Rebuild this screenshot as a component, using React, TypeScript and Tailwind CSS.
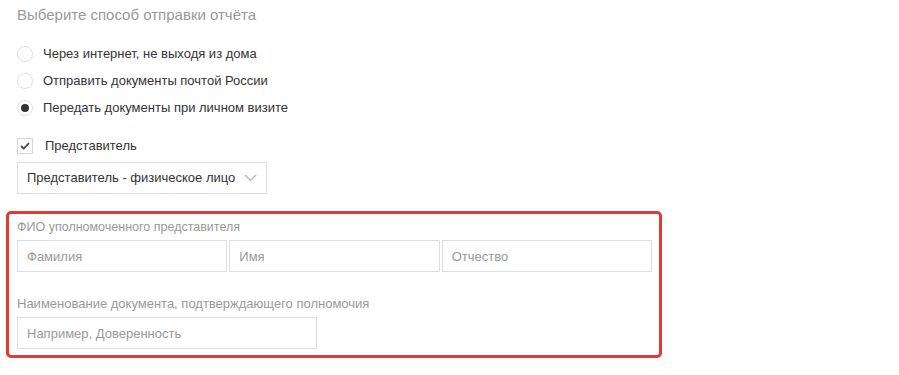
import { useState } from 'react'

const options = [
  'Через интернет, не выходя из дома',
  'Отправить документы почтой России',
  'Передать документы при личном визите',
]

export default function App() {
  const [method, setMethod] = useState(2)
  const [agent, setAgent] = useState(true)

  return (
    <div className="w-[899px] h-[375px] bg-white font-['Liberation_Sans',Arial,sans-serif] text-[#333] pl-[6px] pt-[5px]">
      <div className="pl-[11px]">
        {/* Heading */}
        <h2 className="text-[15px] leading-[20px] text-[#999]">Выберите способ отправки отчёта</h2>

        {/* Radio list */}
        <div className="mt-[21px] flex flex-col gap-[11px]">
          {options.map((label, i) => (
            <label key={label} className="flex items-center h-[16px] cursor-pointer" onClick={() => setMethod(i)}>
              <span className="w-[16px] h-[16px] rounded-full border border-[#e0e0e0] flex items-center justify-center">
                {method === i && <span className="w-[8px] h-[8px] rounded-full bg-[#333]" />}
              </span>
              <span className="ml-[10px] text-[13px] leading-[16px]">{label}</span>
            </label>
          ))}
        </div>

        {/* Checkbox */}
        <label className="mt-[22px] flex items-center h-[16px] cursor-pointer" onClick={() => setAgent(!agent)}>
          <span className="w-[16px] h-[16px] border border-[#d6d6d6] flex items-center justify-center">
            {agent && (
              <svg width="10" height="8" viewBox="0 0 10 8" fill="none">
                <path d="M1 4 L3.8 6.6 L9 1.2" stroke="#444" strokeWidth="1.8" />
              </svg>
            )}
          </span>
          <span className="ml-[12px] text-[13px] leading-[16px]">Представитель</span>
        </label>

        {/* Select */}
        <div className="mt-[8px] w-[250px] h-[32px] border border-[#ddd] flex items-center justify-between pl-[9px] pr-[9px]">
          <span className="text-[13px]">Представитель - физическое лицо</span>
          <svg width="13" height="8" viewBox="0 0 13 8" fill="none">
            <path d="M1 1 L6.5 6.5 L12 1" stroke="#bbb" strokeWidth="1.5" />
          </svg>
        </div>
      </div>

      {/* Highlighted block */}
      <div className="mt-[17px] w-[656px] h-[147px] border-[3px] border-[#e13a30] rounded-[5px] pl-[8px] pr-[7px] pt-[5px]">
        <div className="text-[12.5px] leading-[16px] text-[#999]">ФИО уполномоченного представителя</div>
        <div className="mt-[5px] flex gap-[2px]">
          {['Фамилия', 'Имя', 'Отчество'].map((p) => (
            <input
              key={p}
              placeholder={p}
              className="flex-1 min-w-0 h-[32px] border border-[#ddd] px-[9px] text-[13px] outline-none placeholder:text-[#999]"
            />
          ))}
        </div>
        <div className="mt-[24px] text-[13px] leading-[16px] text-[#999]">
          Наименование документа, подтверждающего полномочия
        </div>
        <input
          placeholder="Например, Доверенность"
          className="mt-[5px] w-[300px] h-[32px] border border-[#ddd] px-[9px] text-[13px] outline-none placeholder:text-[#999]"
        />
      </div>
    </div>
  )
}
